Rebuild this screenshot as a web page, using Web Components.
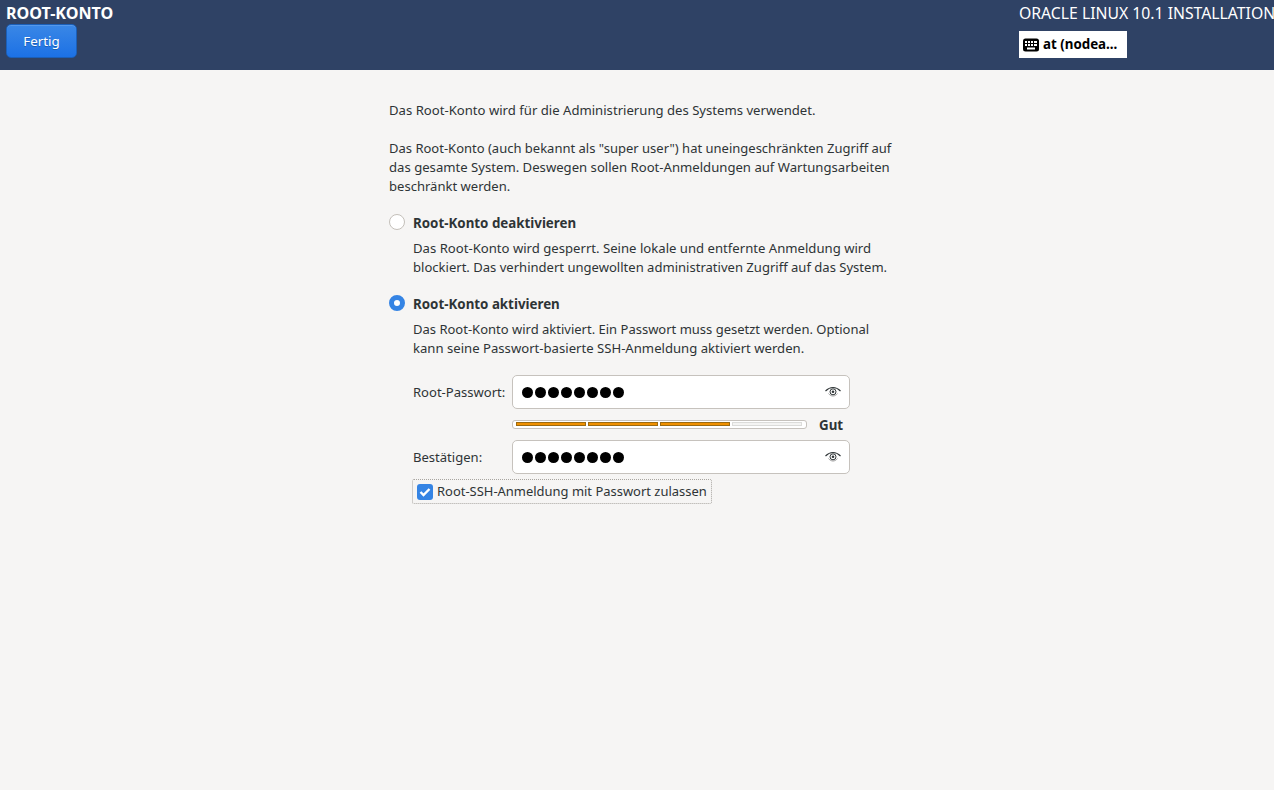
<!DOCTYPE html>
<html lang="de">
<head>
<meta charset="utf-8">
<title>Root-Konto</title>
<style>
  html, body {
    height: 100%;
    margin: 0;
  }

  body {
    background: #f6f5f4;
    color: #2e3436;
    font-family: 'Noto Sans', sans-serif;
    font-size: 13.05px;
    line-height: 19px;
    overflow: hidden;
  }

  main {
    box-sizing: border-box;
    padding: 31px 0 0 389px;
    width: 905px;
  }

  p {
    margin: 0;
  }

  /* Widths differ line by line from the hinted original */
  .narrow {
    font-size: 13px;
  }

  .wide {
    font-size: 13.13px;
  }

  .intro {
    margin-bottom: 19px;
  }

  .form {
    display: flex;
    flex-direction: column;
    margin: 17px 0 0 24px;
    width: 438px;
  }
</style>
</head>
<body>
<oi-header title="ROOT-KONTO" product="ORACLE LINUX 10.1 INSTALLATION" layout="at (nodea..." action="Fertig"></oi-header>
<main>
  <p class="intro wide">Das Root-Konto wird für die Administrierung des Systems verwendet.</p>
  <p><span class="narrow">Das Root-Konto (auch bekannt als "super user") hat uneingeschränkten Zugriff auf</span><br><span class="wide">das gesamte System. Deswegen sollen Root-Anmeldungen auf Wartungsarbeiten</span><br>beschränkt werden.</p>

  <oi-radio label="Root-Konto deaktivieren" style="margin-top: 18px"><span class="wide">Das Root-Konto wird gesperrt. Seine lokale und entfernte Anmeldung wird</span><br>blockiert. Das verhindert ungewollten administrativen Zugriff auf das System.</oi-radio>
  <oi-radio label="Root-Konto aktivieren" checked style="margin-top: 18px"><span class="narrow">Das Root-Konto wird aktiviert. Ein Passwort muss gesetzt werden. Optional</span><br><span class="wide">kann seine Passwort-basierte SSH-Anmeldung aktiviert werden.</span></oi-radio>

  <div class="form">
    <oi-password label="Root-Passwort:"></oi-password>
    <oi-strength label="Gut" level="3"></oi-strength>
    <oi-password label="Bestätigen:"></oi-password>
    <oi-check checked>Root-SSH-Anmeldung mit Passwort zulassen</oi-check>
  </div>
</main>

<script>
class OIHeader extends HTMLElement {
  constructor() {
    super();
    this.attachShadow( {mode: 'open'} );
    this.shadowRoot.innerHTML = /* template */ `
      <style>
        :host {
          background: #2f4265;
          box-sizing: border-box;
          color: #ffffff;
          display: flex;
          font-family: 'Noto Sans', sans-serif;
          height: 70px;
          justify-content: space-between;
          padding: 2px 0 0 6px;
        }

        h1 {
          font-size: 16.13px;
          font-weight: 700;
          line-height: 22px;
          margin: 0;
        }

        button {
          background: linear-gradient( #3a87e6, #1c71e5 );
          border: 1px solid #1b5fb8;
          border-radius: 5px;
          box-shadow: inset 0 1px #5598ea;
          color: #ffffff;
          display: block;
          font-family: inherit;
          font-size: 13.33px;
          height: 34px;
          line-height: 19px;
          padding: 0;
          text-shadow: 0 1px #1a5fb4;
          width: 71px;
        }

        .right {
          width: 255px;
        }

        .product {
          font-size: 15.75px;
          line-height: 22px;
          white-space: nowrap;
        }

        .layout {
          align-items: center;
          background: #ffffff;
          box-sizing: border-box;
          color: #000000;
          display: flex;
          font-size: 13.33px;
          font-weight: 700;
          gap: 4px;
          height: 27px;
          margin-top: 7px;
          padding-left: 4px;
          width: 108px;
        }

        svg {
          display: block;
          flex: none;
        }
      </style>
      <div>
        <h1></h1>
        <button type="button"></button>
      </div>
      <div class="right">
        <div class="product"></div>
        <div class="layout">
          <svg width="16" height="14" viewBox="0 0 16 14">
            <rect x="0" y="0.5" width="16" height="13" rx="2.5" fill="#000"/>
            <g fill="#fff">
              <rect x="2" y="3" width="2" height="2"/><rect x="5" y="3" width="2" height="2"/><rect x="8" y="3" width="2" height="2"/><rect x="11" y="3" width="3" height="2"/>
              <rect x="2" y="6" width="2" height="2"/><rect x="5" y="6" width="2" height="2"/><rect x="8" y="6" width="2" height="2"/><rect x="11" y="6" width="3" height="2"/>
              <rect x="4" y="9.5" width="8" height="2"/>
            </g>
          </svg>
          <span class="name"></span>
        </div>
      </div>
    `;
  }

  connectedCallback() {
    this.shadowRoot.querySelector( 'h1' ).textContent = this.getAttribute( 'title' );
    this.shadowRoot.querySelector( 'button' ).textContent = this.getAttribute( 'action' );
    this.shadowRoot.querySelector( '.product' ).textContent = this.getAttribute( 'product' );
    this.shadowRoot.querySelector( '.name' ).textContent = this.getAttribute( 'layout' );
  }
}

class OIRadio extends HTMLElement {
  constructor() {
    super();
    this.attachShadow( {mode: 'open'} );
    this.shadowRoot.innerHTML = /* template */ `
      <style>
        :host {
          display: grid;
          grid-template-columns: 16px 1fr;
          column-gap: 8px;
          row-gap: 6px;
        }

        .mark {
          align-self: start;
          background: #ffffff;
          border: 1.5px solid #c4c0ba;
          border-radius: 50%;
          box-sizing: border-box;
          height: 16px;
          width: 16px;
        }

        :host( [checked] ) .mark {
          background: #ffffff;
          border: 5px solid #3584e4;
        }

        .label {
          font-size: 13.33px;
          font-weight: 700;
        }

        .help {
          grid-column: 2;
        }
      </style>
      <span class="mark"></span>
      <span class="label"></span>
      <div class="help"><slot></slot></div>
    `;
  }

  connectedCallback() {
    this.shadowRoot.querySelector( '.label' ).textContent = this.getAttribute( 'label' );
  }
}

class OIPassword extends HTMLElement {
  constructor() {
    super();
    this.attachShadow( {mode: 'open'} );
    this.shadowRoot.innerHTML = /* template */ `
      <style>
        :host {
          align-items: center;
          display: flex;
        }

        label {
          flex: none;
          width: 99px;
        }

        .entry {
          align-items: center;
          background: #ffffff;
          border: 1px solid #c6c2bd;
          border-radius: 5px;
          box-sizing: border-box;
          display: flex;
          height: 34px;
          justify-content: space-between;
          padding: 0 8px 0 9px;
          width: 338px;
        }

        .dots {
          display: flex;
          gap: 2px;
        }

        .dots i {
          background: #000000;
          border-radius: 50%;
          display: block;
          height: 11px;
          width: 11px;
        }

        svg {
          display: block;
        }
      </style>
      <label></label>
      <div class="entry">
        <div class="dots"><i></i><i></i><i></i><i></i><i></i><i></i><i></i><i></i></div>
        <svg width="16" height="14" viewBox="0 0 16 14" fill="none" stroke="#2e3436">
          <path d="M0.500 6C3 3.500 5.500 2.500 8 2.500s5 1 7.500 3.500" stroke-width="1.100"/>
          <path d="M3.500 8.500C4.800 10.200 6.400 11 8 11s3.200-.8 4.500-2.500" stroke-width="0.700" stroke="#777"/>
          <circle cx="8" cy="6.800" r="3" stroke-width="1"/>
          <circle cx="8" cy="6.800" r="1.300" fill="#2e3436" stroke="none"/>
        </svg>
      </div>
    `;
  }

  connectedCallback() {
    this.shadowRoot.querySelector( 'label' ).textContent = this.getAttribute( 'label' );
  }
}

class OIStrength extends HTMLElement {
  constructor() {
    super();
    this.attachShadow( {mode: 'open'} );
    this.shadowRoot.innerHTML = /* template */ `
      <style>
        :host {
          align-items: center;
          display: flex;
          height: 31px;
          padding-left: 99px;
        }

        .bar {
          background: #ffffff;
          border: 1px solid #c6c2bd;
          border-radius: 3px;
          box-sizing: border-box;
          display: grid;
          gap: 2px;
          grid-template-columns: repeat( 4, 70px );
          height: 9px;
          padding: 1px 4px 2px 3px;
          width: 295px;
        }

        .bar span {
          background: #f4f4f3;
          border: 1px solid #dcdcda;
          box-sizing: border-box;
        }

        .bar span.on {
          background: #f09000;
          border-color: #9c6a10;
        }

        b {
          font-size: 13.33px;
          margin: 1px 0 0 12px;
        }
      </style>
      <div class="bar"><span></span><span></span><span></span><span></span></div>
      <b></b>
    `;
  }

  connectedCallback() {
    const level = parseInt( this.getAttribute( 'level' ) );

    this.shadowRoot.querySelector( 'b' ).textContent = this.getAttribute( 'label' );
    this.shadowRoot.querySelectorAll( '.bar span' ).forEach( ( item, index ) => {
      item.classList.toggle( 'on', index < level );
    } );
  }
}

class OICheck extends HTMLElement {
  constructor() {
    super();
    this.attachShadow( {mode: 'open'} );
    this.shadowRoot.innerHTML = /* template */ `
      <style>
        :host {
          align-items: center;
          align-self: flex-start;
          border: 1px dotted #a8a5a0;
          border-radius: 2px;
          box-sizing: border-box;
          display: inline-flex;
          font-size: 12.96px;
          gap: 4px;
          height: 25px;
          margin: 5px 0 0 -1px;
          padding: 0 4px;
        }

        .box {
          background: #3584e4;
          border-radius: 3px;
          display: block;
          height: 16px;
          width: 16px;
        }
      </style>
      <svg class="box" viewBox="0 0 16 16">
        <path d="M3.500 8l3 3 6-6" fill="none" stroke="#fff" stroke-width="2.400"/>
      </svg>
      <span><slot></slot></span>
    `;
  }
}

window.customElements.define( 'oi-header', OIHeader );
window.customElements.define( 'oi-radio', OIRadio );
window.customElements.define( 'oi-password', OIPassword );
window.customElements.define( 'oi-strength', OIStrength );
window.customElements.define( 'oi-check', OICheck );
</script>
</body>
</html>
